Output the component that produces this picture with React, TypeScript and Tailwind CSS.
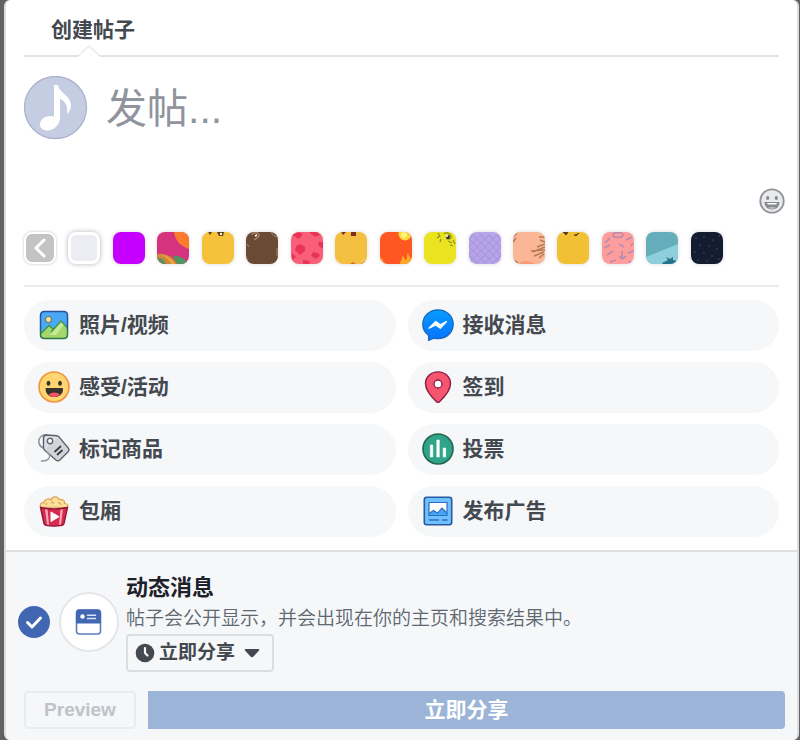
import type { ReactNode } from "react";

const actions = [
	{ title: "照片/视频", icon: <PhotoIcon /> },
	{ title: "接收消息", icon: <MessengerIcon /> },
	{ title: "感受/活动", icon: <FeelingIcon /> },
	{ title: "签到", icon: <PinIcon /> },
	{ title: "标记商品", icon: <TagIcon /> },
	{ title: "投票", icon: <PollIcon /> },
	{ title: "包厢", icon: <PopcornIcon /> },
	{ title: "发布广告", icon: <AdIcon /> },
];

const backgrounds: { name: string; color: string; art?: ReactNode }[] = [
	{ name: "purple", color: "#c600ff" },
	{
		name: "mango",
		color: "#d6337f",
		art: (
			<>
				<path d="M17 0c1 8 6 14 15 17V0z" fill="#fb7b2c" />
				<path d="M0 22c9-1 17 3 20 10H0z" fill="#c9873f" />
				<path d="M2 22c8 1 14 5 16 10h-4C12 27 8 24 2 22z" fill="#f3a13a" />
				<path d="M0 26c5 0 8 3 9 6H0z" fill="#5d8f5c" />
				<path d="M16 24c7-1 12 3 16 8H20z" fill="#4f9460" />
			</>
		),
	},
	{
		name: "smile",
		color: "#f5c33b",
		art: (
			<>
				<path d="M6 0l2 3 2-3zM15 0l2 4 4 0 1-4z" fill="#5b3a17" />
				<circle cx="19" cy="2" r="1.2" fill="#fff" />
				<path d="M0 28l3 4H0zM28 0l4 4V0z" fill="#e9a93a" />
			</>
		),
	},
	{
		name: "chocolate",
		color: "#6b4a35",
		art: (
			<>
				<path d="M6 3c0-3 7-3 7 0s-4 4-5 5" stroke="#a5826a" strokeWidth="1.3" fill="none" />
				<path d="M9 4l2-1" stroke="#fff" strokeWidth="1.5" />
				<path d="M25 0c1 3 4 5 7 5M1 12l2 3M31 16v8M0 24l2 5" stroke="#a58772" fill="none" />
			</>
		),
	},
	{
		name: "hearts",
		color: "#f95f78",
		art: (
			<path
				d="M1 3l6-3 5 2-4 5zM18 0h9l2 3-5 2zM9 12l5 3v4l-5 4-5-5 1-4zM22 20l5 1 2 3-4 3-5-3zM27 10l5 0v7l-4-3zM1 21l4 4-4 3zM12 28l7 1-1 3h-6z"
				fill="#e93458"
			/>
		),
	},
	{
		name: "blush",
		color: "#f3bf40",
		art: (
			<>
				<path d="M6 0l2 3 3-3zM16 0v4h5V0z" fill="#7a2f1c" />
				<path d="M0 28l5 4H0zM15 32l3-2 3 2zM25 32l7-4v4z" fill="#d9682e" />
				<path d="M2 28l3 3M26 30l4-3" stroke="#f9dc78" />
			</>
		),
	},
	{
		name: "fire",
		color: "#ff5722",
		art: (
			<>
				<circle cx="25" cy="2" r="6.5" fill="#f7d93b" />
				<circle cx="24" cy="3" r="3" fill="#fff27d" />
				<path d="M20 32c0-3 3-4 2-8 3 1 3 4 4 4 2-2 0-5 2-7 1 4 4 5 4 11z" fill="#ffa726" />
				<path d="M0 25c3 1 4 4 4 7H0z" fill="#ff8a2b" />
			</>
		),
	},
	{
		name: "lime",
		color: "#e9e320",
		art: (
			<>
				<path
					d="M14 1l2 3-3 2M17 7l-1 3M20 2c2-2 6-1 7 2s-3 4-5 2M24 9l4 2M29 8l2 4M26 13l3 1"
					stroke="#8d8f22"
					strokeWidth="1.2"
					fill="none"
				/>
				<circle cx="24" cy="5" r="2" fill="#333" />
				<circle cx="23" cy="4" r="1" fill="#fff" />
			</>
		),
	},
	{
		name: "scales",
		color: "#b9a6e8",
		art: (
			<path
				d="M-4 3l4 4 4-4 4 4 4-4 4 4 4-4 4 4 4-4 4 4 4-4M-4 11l4-4 4 4 4-4 4 4 4-4 4 4 4-4 4 4 4-4 4 4M-4 11l4 4 4-4 4 4 4-4 4 4 4-4 4 4 4-4 4 4 4-4M-4 19l4-4 4 4 4-4 4 4 4-4 4 4 4-4 4 4 4-4 4 4M-4 19l4 4 4-4 4 4 4-4 4 4 4-4 4 4 4-4 4 4 4-4M-4 27l4-4 4 4 4-4 4 4 4-4 4 4 4-4 4 4 4-4 4 4M-4 27l4 4 4-4 4 4 4-4 4 4 4-4 4 4 4-4 4 4 4-4"
				stroke="#ab98de"
				strokeWidth="1.4"
				fill="none"
			/>
		),
	},
	{
		name: "palm",
		color: "#fbb795",
		art: (
			<>
				<path
					d="M32 15l-12 5M32 18l-14 1M32 12l-8 3M31 20l-10 4M32 10l-5-2M32 5l-6 0M0 5l5-5M0 10l3-4M0 28l5 3M31 22l-5 4"
					stroke="#b47a59"
					strokeWidth="1.5"
				/>
				<path d="M5 32c5-5 13-3 17 0z" fill="#f79a7c" />
			</>
		),
	},
	{
		name: "grin",
		color: "#f2c035",
		art: (
			<>
				<path d="M6 0l3 3 2-3zM17 3q2 2 5-2" stroke="#5b3a17" fill="#5b3a17" />
				<path d="M0 27l4 5H0zM32 27l-4 5h4z" fill="#e9a93a" />
			</>
		),
	},
	{
		name: "anchors",
		color: "#ff9c9c",
		art: (
			<g stroke="#b58bb2" strokeWidth="1.6" fill="none">
				<ellipse cx="16" cy="3" rx="5" ry="2.5" />
				<path d="M3 11l5-5M2 16l6-3M17 12l5 3M24 8l6-3M20 19v8M17 24l3 3 4-3M5 23l6-4M8 30l6-2M26 21l6-2M27 29l2 3M29 14l2-3" />
			</g>
		),
	},
	{
		name: "beach",
		color: "#65adba",
		art: (
			<>
				<path d="M0 25L32 12v20H0z" fill="#8fcfdc" />
				<path d="M16 31l6-3-2-3 4 2 3-2v3l5 1-4 3H17z" fill="#24728c" />
			</>
		),
	},
	{
		name: "night",
		color: "#141d30",
		art: (
			<path
				d="M5 5v2M13 4v2M22 7v2M28 3v2M9 12v2M18 13v2M26 16v2M4 19v2M13 20v2M21 23v2M7 27v2M28 26v2M16 28v2"
				stroke="#2a4057"
				strokeWidth="1.4"
			/>
		),
	},
];

const App = () => {
	return (
		<div
			lang="zh-CN"
			className="min-h-screen bg-[#626262] pl-1 pr-px text-[#444950] font-['Liberation_Sans','Noto_Sans_CJK_SC',sans-serif]">
			<main className="min-h-screen flex flex-col rounded-md border-x-2 border-[#dcdddf] bg-white overflow-hidden">
				<div className="px-[18px]">
					<header className="relative h-[57px] pl-[27px] pt-1 border-b-2 border-[#e1e3e6] flex items-center">
						<h1 className="text-[21px] font-bold">创建帖子</h1>
						<svg className="absolute left-[54px] -bottom-0.5" width="22" height="12" viewBox="0 0 22 12">
							<path d="M0 12L11 1l11 11z" fill="#fff" />
							<path d="M0 11L11 1l11 10" stroke="#e6e8ea" strokeWidth="1.3" fill="none" />
						</svg>
					</header>

					<div className="flex gap-[18px] pt-[19px]">
						<Avatar />
						<textarea
							aria-label="发帖"
							placeholder="发帖..."
							className="flex-1 min-w-0 h-28 text-[41px] leading-[66px] placeholder:text-[#90949c] resize-none outline-none overflow-hidden"
						/>
					</div>
					<div className="flex justify-end -mr-1.5">
						<button type="button" aria-label="表情">
							<EmojiIcon />
						</button>
					</div>

					{/* Background picker */}
					<div className="mt-[18px] pb-[21px] pr-14 flex justify-between items-center border-b-2 border-[#e9ebee]">
						<button
							type="button"
							aria-label="收起"
							className="size-8 rounded-lg border-2 border-white bg-[#c4c4c4] shadow-[0_0_3px_rgba(0,0,0,0.25)] flex items-center justify-center">
							<svg width="14" height="20" viewBox="0 0 14 20" fill="none">
								<path d="M11 2L3 10l8 8" stroke="#fff" strokeWidth="3" strokeLinecap="round" strokeLinejoin="round" />
							</svg>
						</button>
						<button
							type="button"
							aria-label="white"
							className="size-8 rounded-lg border-[3px] border-white bg-[#ebedf2] shadow-[0_0_5px_rgba(0,0,0,0.3)]"
						/>
						{backgrounds.map((bg) => (
							<Swatch key={bg.name} {...bg} />
						))}
					</div>

					<div className="grid grid-cols-2 gap-x-3 gap-y-[11px] py-[13px]">
						{actions.map((action) => (
							<button
								type="button"
								key={action.title}
								className="h-[51px] pl-3.5 pb-0.5 flex items-center gap-[9px] rounded-full bg-[#f5f7f9] text-[21px] font-bold">
								{action.icon}
								{action.title}
							</button>
						))}
					</div>
				</div>

				<footer className="flex-1 border-t-2 border-[#dddfe2] bg-[#f5f7f9] pt-5 px-3 pb-[11px]">
					<div className="flex items-center">
						<div className="relative size-8 mr-[9px]">
							<input
								id="feed"
								type="checkbox"
								defaultChecked
								className="block appearance-none size-8 rounded-full bg-[#4267b2]"
							/>
							<svg className="absolute inset-0 pointer-events-none" width="32" height="32" viewBox="0 0 32 32" fill="none">
								<path d="M9.500 16.500l4.500 4.500 8.500-9" stroke="#fff" strokeWidth="3" strokeLinecap="round" strokeLinejoin="round" />
							</svg>
						</div>
						<div className="size-[60px] mr-[7px] rounded-full border-2 border-[#e4e6e9] bg-white flex items-center justify-center">
							<FeedIcon />
						</div>
						<div>
							<label htmlFor="feed" className="block text-[22px] leading-8 font-bold text-[#1d2129]">
								动态消息
							</label>
							<p className="text-[19px] leading-[30px] font-[350] text-[#606770]">
								帖子会公开显示，并会出现在你的主页和搜索结果中。
							</p>
							<div className="h-[38px] w-fit pl-[7px] pr-3 flex items-center rounded-sm border-2 border-[#dadde1]">
								<svg width="20" height="20" viewBox="0 0 20 20" fill="none">
									<circle cx="10" cy="10" r="9.300" fill="#444950" />
									<path d="M10 5v5l2.500 2.500" stroke="#f5f7f9" strokeWidth="2.200" strokeLinecap="round" />
								</svg>
								<select
									aria-label="分享时间"
									className="appearance-none bg-transparent pl-1 pr-2 text-[19px] font-bold outline-none">
									<option>立即分享</option>
								</select>
								<svg width="16" height="10" viewBox="0 0 16 10">
									<path d="M2 1h12q2 0 .8 1.700L9.500 8.600q-1.500 1.200-3 0L1.200 2.700Q0 1 2 1z" fill="#444950" />
								</svg>
							</div>
						</div>
					</div>
					<div className="mt-[19px] pl-1.5 flex gap-3">
						<button
							type="button"
							disabled
							className="h-[38px] w-28 rounded-sm border-2 border-[#e9ecef] text-[19px] font-bold text-[#bec3c9]">
							Preview
						</button>
						<button
							type="button"
							disabled
							className="h-[38px] flex-1 rounded-r-sm bg-[#9cb4d8] text-[21px] font-bold text-white">
							立即分享
						</button>
					</div>
				</footer>
			</main>
		</div>
	);
};

const Swatch = ({ name, color, art }: { name: string; color: string; art?: ReactNode }) => {
	return (
		<button
			type="button"
			aria-label={name}
			className="size-8 rounded-lg overflow-hidden shadow-[0_0_4px_rgba(0,0,0,0.15)]"
			style={{ backgroundColor: color }}>
			<svg width="32" height="32" viewBox="0 0 32 32">
				{art}
			</svg>
		</button>
	);
};

function Avatar() {
	return (
		<svg className="shrink-0" width="64" height="64" viewBox="0 0 64 64">
			<circle cx="31.500" cy="31.500" r="31" fill="#c5cde3" stroke="#abb3cd" strokeWidth="1.300" />
			<path
				d="M30 9h4c.5 7 13 11 13 20 0 4-1.500 7-4 9 1-7-1-13-7-15v18c0 8-6 13.500-12.500 13.500-4.500 0-7.500-2.500-7.500-6 0-5 5-8.500 10-8.500 1.500 0 3 .2 4 .6z"
				fill="#fff"
			/>
		</svg>
	);
}

function EmojiIcon() {
	return (
		<svg width="26" height="26" viewBox="0 0 26 26">
			<circle cx="13" cy="13" r="11.700" fill="#e9eaec" stroke="#8f9296" strokeWidth="1.800" />
			<ellipse cx="8.700" cy="10" rx="1.600" ry="2" fill="#85888d" />
			<ellipse cx="17.300" cy="10" rx="1.600" ry="2" fill="#85888d" />
			<path d="M5.500 14h15c0 4.500-3 7.500-7.500 7.500s-7.500-3-7.500-7.500z" fill="#85888d" />
			<path d="M8 15h10l-.7 1.500H8.700z" fill="#fff" />
			<path d="M9 19.700q4-2 8 0-4 2.500-8 0z" fill="#b5b7ba" />
		</svg>
	);
}

function PhotoIcon() {
	return (
		<svg width="32" height="32" viewBox="0 0 32 32">
			<rect x="2.500" y="2.500" width="27" height="27" rx="4" fill="#4aa8f5" />
			<path d="M3 24.500l8-8 4.500 4L23 12l6.500 7v7q0 3.500-3.500 3.500H6q-3 0-3-3z" fill="#a5d86c" />
			<path d="M16 20.500L23 12l3 3.500-8 10.500-6 0z" fill="#c8ea97" />
			<path d="M3 24.500l8-8 4.500 4L23 12l6.500 7M13 23l2.500-2.500" stroke="#3f9447" strokeWidth="1.300" fill="none" />
			<circle cx="10.500" cy="10.500" r="3" fill="#ffe38a" stroke="#5d7b78" strokeWidth="1.100" />
			<path d="M2.500 21V6.500q0-4 4-4h19q4 0 4 4V21" stroke="#25549b" strokeWidth="1.500" fill="none" />
			<path d="M2.500 21v4.500q0 4 4 4h19q4 0 4-4V21" stroke="#2d7946" strokeWidth="1.500" fill="none" />
		</svg>
	);
}

function MessengerIcon() {
	return (
		<svg width="32" height="32" viewBox="0 0 32 32">
			<defs>
				<linearGradient id="messenger" x1="0" y1="0" x2="0" y2="1">
					<stop offset="0" stopColor="#079cff" />
					<stop offset="1" stopColor="#0872ff" />
				</linearGradient>
			</defs>
			<path
				d="M16 .8C7.500 .8 .8 7.200 .8 15.200c0 5 2.200 8.400 5.800 11.200v4.900l5.400-2.200c1.300.3 2.600.5 4 .5 8.500 0 15.200-6.300 15.200-14.400S24.500.8 16 .8z"
				fill="url(#messenger)"
				stroke="#1769bd"
				strokeWidth="1.300"
			/>
			<path d="M7 19.200l6.800-6.700 4.500 3.300 6.200-3.300-6.200 6.700-4.500-3.200z" fill="#fff" stroke="#fff" strokeWidth="1.300" strokeLinejoin="round" />
		</svg>
	);
}

function FeelingIcon() {
	return (
		<svg width="32" height="32" viewBox="0 0 32 32">
			<circle cx="16" cy="16" r="15" fill="#ffd56f" stroke="#f2933f" strokeWidth="1.600" />
			<ellipse cx="10.500" cy="12.300" rx="1.900" ry="2.500" fill="#38322d" />
			<ellipse cx="22" cy="12.300" rx="1.900" ry="2.500" fill="#38322d" />
			<path d="M7.500 17.500q0-.5.800-.5h16q.8 0 .8.700c0 5-3.500 8.300-8.800 8.300s-8.800-3.300-8.800-8.500z" fill="#38322d" />
			<path d="M10.500 23.500q5.800-4 11.600 0c-3.500 3.200-8.200 3.200-11.600 0z" fill="#f65268" />
		</svg>
	);
}

function PinIcon() {
	return (
		<svg width="32" height="32" viewBox="0 0 32 32">
			<path
				d="M16 .9C8.800.9 3.500 6 3.500 12.600c0 6.500 6 13.500 10.800 18q1.700 1.400 3.400 0c4.800-4.500 10.800-11.500 10.800-18C28.500 6 23.200.9 16 .9z"
				fill="#f65570"
				stroke="#8c1c42"
				strokeWidth="1.400"
			/>
			<circle cx="16" cy="13" r="4" fill="#fff" stroke="#8c1c42" strokeWidth="1.300" />
		</svg>
	);
}

function TagIcon() {
	return (
		<svg width="32" height="32" viewBox="0 0 32 32" fill="none">
			<path d="M9 2C4 1 0 5 1 10c.5 2.500 2 4 4 5" stroke="#8e949c" strokeWidth="1.500" />
			<path
				d="M5.500 4.500q.5-2.500 3-2.500l10 .7q1.500.2 2.500 1.300l9.500 11.500q1 1.500-.2 3l-8.500 8.500q-1.700 1.500-3.500.2L6.500 17q-1-1-1-2.500z"
				fill="#dfe1e6"
				stroke="#5b6068"
				strokeWidth="1.400"
			/>
			<path d="M6.500 16.500L20.500 4l9 11.500q.7 1-.2 2l-8.300 8.300q-1.500 1-2.500.2z" fill="#c8cbd1" opacity=".6" />
			<circle cx="12" cy="8" r="2.700" fill="#fff" stroke="#606770" strokeWidth="1.400" />
			<path d="M17 18.500l5.500-5M19.500 21.500l4.500-4" stroke="#363a40" strokeWidth="1.700" strokeLinecap="round" />
			<path d="M9 19c3 2 3.500 5 1.500 7-2 2.300-5 2.200-7.500 2" stroke="#8e949c" strokeWidth="1.400" />
		</svg>
	);
}

function PollIcon() {
	return (
		<svg width="32" height="32" viewBox="0 0 32 32">
			<circle cx="16" cy="16" r="15" fill="#2fa48a" stroke="#24674a" strokeWidth="1.600" />
			<path d="M8.300 12h2.500v12H8.300zM14.800 7h2.500v17h-2.500zM21.200 15h2.500v9h-2.500z" fill="#fff" stroke="#fff" strokeWidth=".6" strokeLinejoin="round" />
		</svg>
	);
}

function PopcornIcon() {
	return (
		<svg width="32" height="32" viewBox="0 0 32 32">
			<path
				d="M3 12c-2-3 1-5 3-4 0-4 5-5 7-3 1-4 7-4 8-.500 4-.5 6 1 5.500 4 3.500 0 4 2 2.500 4z"
				fill="#ffe09a"
				stroke="#d9a755"
				strokeWidth="1.200"
			/>
			<path d="M8 10l1-2M13 8q2-2 3 1M20 8q2-1 3 2" stroke="#d9a755" strokeWidth="1.300" fill="none" />
			<path d="M2.500 12.500q13.500 3 27 0l-3.500 16q-.5 1.500-2 1.900-8 1.500-16 0-1.500-.4-2-1.900z" fill="#d92a4d" />
			<path d="M7 13.400l2.500.4 1.500 16-2-.4zM25 13.400l-2.500.4-1.500 16 2-.4z" fill="#f2aabb" />
			<path d="M2.500 12.500q13.500 3 27 0l-3.500 16q-.5 1.500-2 1.900-8 1.500-16 0-1.500-.4-2-1.900z" fill="none" stroke="#96163a" strokeWidth="1.400" />
			<path d="M13 17l8 4.700-8 4.800z" fill="#fff" stroke="#fff" strokeLinejoin="round" />
		</svg>
	);
}

function AdIcon() {
	return (
		<svg width="32" height="32" viewBox="0 0 32 32">
			<rect x="2.300" y="2.300" width="27.400" height="27.400" rx="2.500" fill="#70bfff" stroke="#2959a0" strokeWidth="1.600" />
			<path d="M7 7.500h18v13H7z" fill="#fff" />
			<path d="M7 18.500l4.500-3 4 2.500 4.500-5 5 5v2.500H7z" fill="#43a5f5" />
			<path d="M7 18.500l4.500-3 4 2.500 4.500-5 5 5" stroke="#2f6ebc" strokeWidth="1.100" fill="none" />
			<path d="M7 7.500h18v13H7z" fill="none" stroke="#2f6ebc" strokeWidth="1.200" />
			<path d="M7.500 25h9M20.500 25h4.500" stroke="#2f6ebc" strokeWidth="1.500" strokeLinecap="round" />
		</svg>
	);
}

function FeedIcon() {
	return (
		<svg width="28" height="28" viewBox="0 0 28 28">
			<rect x="1.500" y="2" width="24" height="24" rx="3" fill="#fff" stroke="#5c7dc0" strokeWidth="1.600" />
			<path d="M1 14V5q0-3.500 3-3.500h19q3 0 3 3.500v9q0 1.500-1 1.500H2q-1 0-1-1.500z" fill="#4267b2" />
			<circle cx="7.500" cy="8.500" r="2.200" fill="#fff" />
			<path d="M12.500 7.300h8M12.500 10.500h8" stroke="#dbe4f5" strokeWidth="1.500" strokeLinecap="round" />
		</svg>
	);
}

export default App;
